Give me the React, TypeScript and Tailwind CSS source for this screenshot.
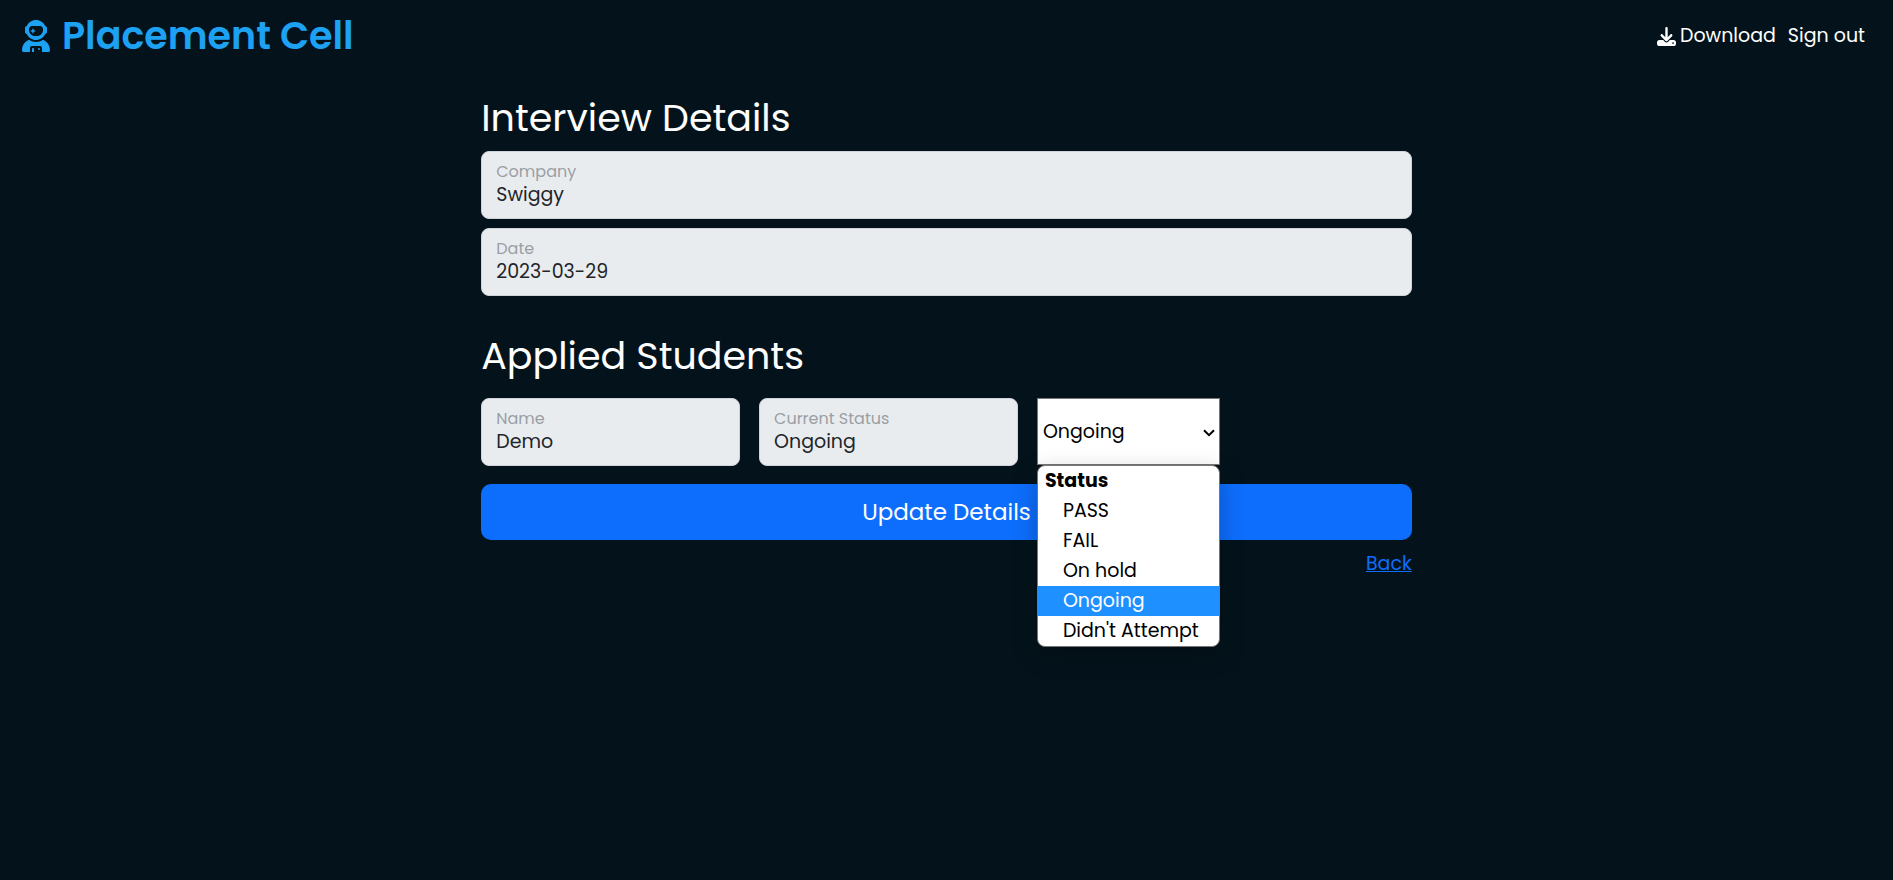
import { useId, useState } from "react";
import { FaDownload, FaUserAstronaut } from "react-icons/fa6";

const STATUSES = ["PASS", "FAIL", "On hold", "Ongoing", "Didn't Attempt"];

function Field({ label, value }: { label: string; value: string }) {
  const id = useId();
  return (
    <div className="flex h-[68px] min-w-0 flex-col rounded-lg border border-[#ced4da] bg-[#e9ecef] px-[14px] pt-[10px]">
      <label htmlFor={id} className="text-base leading-5 text-[#9a9fa4]">
        {label}
      </label>
      <input
        id={id}
        readOnly
        value={value}
        className="h-[26px] w-full bg-transparent text-[19px] leading-[26px] text-[#212529] outline-none"
      />
    </div>
  );
}

function StatusSelect() {
  const [status, setStatus] = useState("Ongoing");
  return (
    <div className="relative w-[183px] self-start">
      <select
        aria-label="Status"
        value={status}
        onChange={(e) => setStatus(e.target.value)}
        className="block h-[67px] w-full appearance-none border border-[#767676] bg-white pt-0.5 pr-6 pl-[5px] text-[19px] text-black outline-none"
      >
        {STATUSES.map((s) => (
          <option key={s}>{s}</option>
        ))}
      </select>
      <svg
        viewBox="0 0 12 8"
        className="pointer-events-none absolute top-[31px] right-[5px] h-2 w-3"
        fill="none"
        stroke="#000"
        strokeWidth="2"
      >
        <path d="M1 1.2 6 6.2 11 1.2" />
      </svg>
      <div className="absolute top-full left-0 z-10 w-full rounded-lg shadow-[0_8px_24px_rgba(0,0,0,0.25)]">
        <div
          role="listbox"
          aria-label="Status"
          className="overflow-hidden rounded-lg border border-[#767676] bg-white text-[19px] leading-[30px] text-black"
        >
          <div className="pl-[7px] font-bold">Status</div>
          {STATUSES.map((s) => (
            <div
              key={s}
              role="option"
              aria-selected={s === status}
              onClick={() => setStatus(s)}
              className="pl-[25px] whitespace-nowrap aria-selected:bg-[#1e90ff] aria-selected:text-white"
            >
              {s}
            </div>
          ))}
        </div>
      </div>
    </div>
  );
}

export default function App() {
  return (
    <div className="min-h-screen bg-[#04131b] font-[Poppins,Inter,sans-serif] text-white">
      <header className="flex h-[71px] items-center justify-between pr-7 pl-[22px]">
        <a href="#home" className="flex items-center gap-3 text-[38px] font-semibold text-[#1da1f2]">
          <FaUserAstronaut className="h-8 w-7" />
          <span>Placement Cell</span>
        </a>
        <nav className="flex items-center gap-3 pt-0.5 text-[19px]">
          <a href="#download" className="flex items-center gap-1">
            <FaDownload className="size-[19px]" />
            Download
          </a>
          <a href="#signout">Sign out</a>
        </nav>
      </header>

      <main className="mx-auto w-1/2 px-2 pt-[23px]">
        <h1 className="mb-[9px] text-[38px] leading-[48px]">Interview Details</h1>
        <div className="flex flex-col gap-[9px]">
          <Field label="Company" value="Swiggy" />
          <Field label="Date" value="2023-03-29" />
        </div>

        <h2 className="mt-9 mb-[18px] text-[38px] leading-[48px]">Applied Students</h2>
        <div className="grid grid-cols-[29fr_29fr_42fr] gap-[19px]">
          <Field label="Name" value="Demo" />
          <Field label="Current Status" value="Ongoing" />
          <StatusSelect />
        </div>

        <button type="button" className="mt-[18px] h-14 w-full rounded-[10px] bg-[#0d6efd] text-[23px]">
          Update Details
        </button>
        <div className="mt-[10px] text-right">
          <a href="#back" className="text-[19px] leading-7 text-[#0d6efd] underline">
            Back
          </a>
        </div>
      </main>
    </div>
  );
}
